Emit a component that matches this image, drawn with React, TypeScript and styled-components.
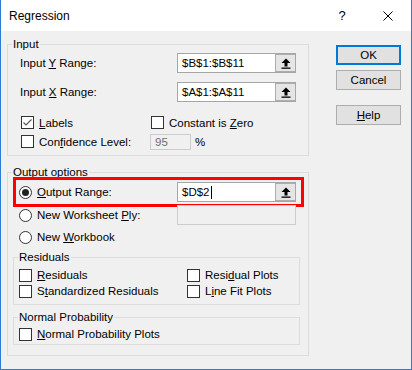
import React from "react"
import styled, { createGlobalStyle } from "styled-components"

const GlobalStyle = createGlobalStyle`
  html, body {
    margin: 0;
    padding: 0;
  }
  body {
    background: #ffffff;
    font-family: "Liberation Sans", Arial, sans-serif;
    font-size: 11.5px;
    color: #000;
  }
`

const Window = styled.div`
  width: 412px;
  height: 370px;
  box-sizing: border-box;
  border: 1px solid #2b7cd3;
  border-top: 0;
  background: #f0f0f0;
  display: flex;
  flex-direction: column;
`

const TitleBar = styled.div`
  height: 31px;
  flex: none;
  background: #fff;
  display: flex;
  align-items: center;
  padding-left: 8px;
`

const Title = styled.div`
  flex: 1;
  font-size: 12px;
`

const CaptionButton = styled.div`
  width: 46px;
  height: 31px;
  display: flex;
  align-items: center;
  justify-content: center;
  font-size: 13px;
`

const Body = styled.div`
  display: flex;
  align-items: flex-start;
  padding: 5px 0 0 6px;
`

const LeftColumn = styled.div`
  width: 302px;
  display: flex;
  flex-direction: column;
  gap: 8px;
`

const Group = styled.fieldset<{ $inset?: boolean }>`
  margin: ${(p) => (p.$inset ? "0 8px 0 5px" : "0")};
  padding: 0;
  min-width: 0;
  border: 1px solid #dcdcdc;
`

const Caption = styled.legend`
  margin-left: 4px;
  padding: 0 1px;
  line-height: 16px;
  height: 16px;
`

const InputContent = styled.div`
  padding: 1px 0 4px 12px;
  display: flex;
  flex-direction: column;
`

const RangeRow = styled.div<{ $top?: number }>`
  display: grid;
  grid-template-columns: 157px 119px;
  align-items: center;
  height: 20px;
  margin-top: ${(p) => p.$top ?? 0}px;
`

const FieldLabel = styled.span`
  white-space: nowrap;
`

const Key = styled.span`
  text-decoration: underline;
  text-underline-offset: 1px;
`

const RangeBox = styled.div`
  display: flex;
  height: 20px;
  box-sizing: border-box;
  border: 1px solid #a6a6a6;
  background: #fff;
`

const RangeText = styled.div`
  flex: 1;
  display: flex;
  align-items: center;
  padding-left: 4px;
  white-space: nowrap;
`

const Caret = styled.span`
  display: inline-block;
  width: 1px;
  height: 13px;
  margin-left: 1px;
  background: #000;
`

const RangeButton = styled.div`
  width: 20px;
  box-sizing: border-box;
  border: 1px solid #adadad;
  border-right: 0;
  background: #e5e5e5;
  display: flex;
  align-items: center;
  justify-content: center;
`

const DisabledBox = styled.div<{ $width: number; $height: number }>`
  width: ${(p) => p.$width}px;
  height: ${(p) => p.$height}px;
  box-sizing: border-box;
  border: 1px solid #cccccc;
  background: #f0f0f0;
  color: #6d6d6d;
  padding-left: 4px;
  display: flex;
  align-items: center;
`

const CheckGrid = styled.div<{ $first: number; $top: number; $rows: number }>`
  display: grid;
  grid-template-columns: ${(p) => p.$first}px auto;
  grid-auto-rows: ${(p) => p.$rows}px;
  align-items: center;
  margin-top: ${(p) => p.$top}px;
`

const Option = styled.label`
  display: flex;
  align-items: center;
  gap: 5px;
  white-space: nowrap;
`

const Box = styled.span<{ $shift?: number }>`
  width: 13px;
  height: 13px;
  box-sizing: border-box;
  border: 1px solid #333;
  background: #fff;
  flex: none;
  display: flex;
  align-items: center;
  justify-content: center;
  margin-left: ${(p) => p.$shift ?? 0}px;
`

const Round = styled.span<{ $checked?: boolean }>`
  width: 13px;
  height: 13px;
  box-sizing: border-box;
  border: 1px solid #333;
  border-radius: 50%;
  background: #fff;
  flex: none;
  display: flex;
  align-items: center;
  justify-content: center;

  &::after {
    content: "";
    display: ${(p) => (p.$checked ? "block" : "none")};
    width: 7px;
    height: 7px;
    border-radius: 50%;
    background: #222;
  }
`

const ConfidenceCell = styled.div`
  display: flex;
  align-items: center;
  gap: 4px;
`

const OutputContent = styled.div`
  display: flex;
  flex-direction: column;
  padding: 2px 0 10px 0;
`

const RadioRow = styled.div<{ $top?: number }>`
  position: relative;
  display: grid;
  grid-template-columns: 158px 119px;
  align-items: center;
  height: 20px;
  padding-left: 11px;
  margin-top: ${(p) => p.$top ?? 0}px;
`

const Highlight = styled.div`
  position: absolute;
  left: 5px;
  top: -5px;
  width: 291px;
  height: 30px;
  box-sizing: border-box;
  border: 3px solid #ff0000;
  pointer-events: none;
`

const SubContent = styled.div<{ $top: number; $bottom: number }>`
  padding: ${(p) => p.$top}px 0 ${(p) => p.$bottom}px 5px;
`

const ButtonColumn = styled.div`
  display: flex;
  flex-direction: column;
  margin: 9px 0 0 27px;
`

const DialogButton = styled.div<{ $default?: boolean; $top?: number }>`
  width: 65px;
  height: 20px;
  box-sizing: border-box;
  border: ${(p) => (p.$default ? "2px solid #0078d7" : "1px solid #adadad")};
  background: #e1e1e1;
  display: flex;
  align-items: center;
  justify-content: center;
  margin-top: ${(p) => p.$top ?? 0}px;
`

const UpArrow = () => (
  <svg width="10" height="11" viewBox="0 0 10 11">
    <path d="M5 0.5 L9.5 5 H6.5 V8.5 H3.5 V5 H0.5 Z" fill="#000" />
    <rect x="0.5" y="9.5" width="9" height="1.3" fill="#000" />
  </svg>
)

const CloseIcon = () => (
  <svg width="10" height="10" viewBox="0 0 10 10">
    <path d="M0.5 0.5 L9.5 9.5 M9.5 0.5 L0.5 9.5" stroke="#000" strokeWidth="1" />
  </svg>
)

const Tick = () => (
  <svg width="11" height="11" viewBox="0 0 11 11">
    <path d="M1.5 5.5 L4 8 L9.5 2.5" fill="none" stroke="#555" strokeWidth="1.1" />
  </svg>
)

function RangeField({ value, caret }: { value: string; caret?: boolean }) {
  return (
    <RangeBox>
      <RangeText>
        {value}
        {caret && <Caret />}
      </RangeText>
      <RangeButton>
        <UpArrow />
      </RangeButton>
    </RangeBox>
  )
}

function Check({ checked, shift, children }: { checked?: boolean; shift?: number; children: React.ReactNode }) {
  return (
    <Option>
      <Box $shift={shift}>{checked && <Tick />}</Box>
      <span>{children}</span>
    </Option>
  )
}

function Radio({ checked, children }: { checked?: boolean; children: React.ReactNode }) {
  return (
    <Option>
      <Round $checked={checked} />
      <span>{children}</span>
    </Option>
  )
}

export default function App() {
  return (
    <>
      <GlobalStyle />
      <Window>
        <TitleBar>
          <Title>Regression</Title>
          <CaptionButton>?</CaptionButton>
          <CaptionButton>
            <CloseIcon />
          </CaptionButton>
        </TitleBar>

        <Body>
          <LeftColumn>
            <Group>
              <Caption>Input</Caption>
              <InputContent>
                <RangeRow>
                  <FieldLabel>
                    Input <Key>Y</Key> Range:
                  </FieldLabel>
                  <RangeField value="$B$1:$B$11" />
                </RangeRow>
                <RangeRow $top={9}>
                  <FieldLabel>
                    Input <Key>X</Key> Range:
                  </FieldLabel>
                  <RangeField value="$A$1:$A$11" />
                </RangeRow>
                <CheckGrid $first={130} $top={11} $rows={19}>
                  <Check checked shift={1}>
                    <Key>L</Key>abels
                  </Check>
                  <Check shift={1}>
                    Constant is <Key>Z</Key>ero
                  </Check>
                  <Check shift={1}>
                    Con<Key>f</Key>idence Level:
                  </Check>
                  <ConfidenceCell>
                    <DisabledBox $width={41} $height={16}>
                      95
                    </DisabledBox>
                    <span>%</span>
                  </ConfidenceCell>
                </CheckGrid>
              </InputContent>
            </Group>

            <Group>
              <Caption>Output options</Caption>
              <OutputContent>
                <RadioRow>
                  <Highlight />
                  <Radio checked>
                    <Key>O</Key>utput Range:
                  </Radio>
                  <RangeField value="$D$2" caret />
                </RadioRow>
                <RadioRow $top={3}>
                  <Radio>
                    New Worksheet <Key>P</Key>ly:
                  </Radio>
                  <DisabledBox $width={119} $height={20} />
                </RadioRow>
                <RadioRow $top={2}>
                  <Radio>
                    New <Key>W</Key>orkbook
                  </Radio>
                </RadioRow>

                <Group $inset style={{ marginTop: 2 }}>
                  <Caption>Residuals</Caption>
                  <SubContent $top={2} $bottom={5}>
                    <CheckGrid $first={168} $top={0} $rows={16}>
                      <Check>
                        <Key>R</Key>esiduals
                      </Check>
                      <Check>
                        Resi<Key>d</Key>ual Plots
                      </Check>
                      <Check>
                        S<Key>t</Key>andardized Residuals
                      </Check>
                      <Check>
                        L<Key>i</Key>ne Fit Plots
                      </Check>
                    </CheckGrid>
                  </SubContent>
                </Group>

                <Group $inset style={{ marginTop: 4 }}>
                  <Caption>Normal Probability</Caption>
                  <SubContent $top={1} $bottom={2}>
                    <CheckGrid $first={168} $top={0} $rows={16}>
                      <Check>
                        <Key>N</Key>ormal Probability Plots
                      </Check>
                    </CheckGrid>
                  </SubContent>
                </Group>
              </OutputContent>
            </Group>
          </LeftColumn>

          <ButtonColumn>
            <DialogButton $default>OK</DialogButton>
            <DialogButton $top={5}>Cancel</DialogButton>
            <DialogButton $top={15}>
              <Key>H</Key>elp
            </DialogButton>
          </ButtonColumn>
        </Body>
      </Window>
    </>
  )
}
